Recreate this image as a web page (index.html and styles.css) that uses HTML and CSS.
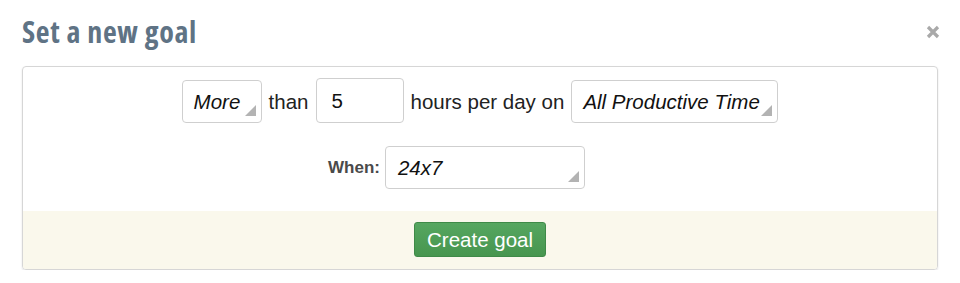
FILE: index.html
```html
<!DOCTYPE html>
<html>
<head>
<meta charset="utf-8">
<link rel="stylesheet" href="styles.css">
</head>
<body>
<div class="modal">
  <div class="modal-header">
    <h1 class="title">Set a new goal</h1>
    <button class="close" aria-label="Close">
      <svg width="14" height="14" viewBox="0 0 14 14"><path d="M2 2 L12 12 M12 2 L2 12" stroke="#a9a9a9" stroke-width="3.2" stroke-linecap="butt"/></svg>
    </button>
  </div>
  <div class="panel">
    <div class="panel-body">
      <div class="row row-main">
        <div class="select sel-more">More</div>
        <span class="word">than</span>
        <div class="input">5</div>
        <span class="word">hours per day on</span>
        <div class="select sel-cat">All Productive Time</div>
      </div>
      <div class="row row-when">
        <label class="label">When:</label>
        <div class="select sel-when">24x7</div>
      </div>
    </div>
    <div class="panel-footer">
      <button class="btn">Create goal</button>
    </div>
  </div>
</div>
</body>
</html>
```
FILE: styles.css
```css
html, body {
  margin: 0;
  padding: 0;
  background: #fff;
}
body {
  font-family: "Liberation Sans", Arial, sans-serif;
  color: #222;
}
.modal {
  width: 960px;
  padding: 0 22px 0 22px;
  box-sizing: border-box;
}
.modal-header {
  display: flex;
  justify-content: space-between;
  align-items: flex-start;
  height: 66px;
}
.title {
  margin: 13px 0 0 0;
  font-family: "Open Sans", "DejaVu Sans", sans-serif;
  font-stretch: 87.5%;
  font-weight: 700;
  font-size: 30px;
  line-height: 38px;
  color: #5f7385;
  letter-spacing: 0.7px;
}
.close {
  margin: 25px -2px 0 0;
  padding: 0;
  border: 0;
  background: none;
  width: 14px;
  height: 14px;
  display: block;
}
.close svg { display: block; }
.panel {
  border: 1px solid #d6d6d6;
  border-radius: 4px;
  box-shadow: 0 1px 2px rgba(0,0,0,0.12);
  overflow: hidden;
}
.panel-body {
  padding: 11px 0 22px 0;
  display: flex;
  flex-direction: column;
  gap: 23px;
}
.row {
  display: flex;
  justify-content: center;
  align-items: flex-end;
  gap: 7px;
}
.row-when {
  padding-right: 47px;
  gap: 5px;
  align-items: center;
}
.word {
  font-size: 20.5px;
  line-height: 43px;
  color: #222;
}
.select, .input {
  box-sizing: border-box;
  height: 43px;
  border: 1px solid #cfcfcf;
  border-radius: 4px;
  background: #fff;
  font-size: 20.5px;
  line-height: 41px;
  color: #111;
  position: relative;
}
.select {
  font-style: italic;
  padding-left: 11px;
}
.select::after {
  content: "";
  position: absolute;
  right: 5px;
  bottom: 6px;
  width: 0;
  height: 0;
  border-left: 11px solid transparent;
  border-bottom: 11px solid #b3b3b3;
}
.sel-more { width: 80px; }
.sel-cat { width: 207px; }
.sel-when { width: 200px; }
.input {
  width: 88px;
  height: 45px;
  line-height: 43px;
  padding-left: 15px;
}
.label {
  font-size: 17px;
  font-weight: bold;
  color: #4a4a4a;
}
.sel-when { line-height: 41px; padding-left: 12px; }
.panel-footer {
  background: #faf8ec;
  padding: 11px 0 12px 0;
  display: flex;
  justify-content: center;
}
.btn {
  width: 132px;
  height: 35px;
  border: 1px solid #3f8a48;
  border-radius: 3px;
  background: linear-gradient(#56a660, #47964f);
  color: #fff;
  font-family: "Liberation Sans", Arial, sans-serif;
  font-size: 20.5px;
  line-height: 33px;
  padding: 0;
}
```
